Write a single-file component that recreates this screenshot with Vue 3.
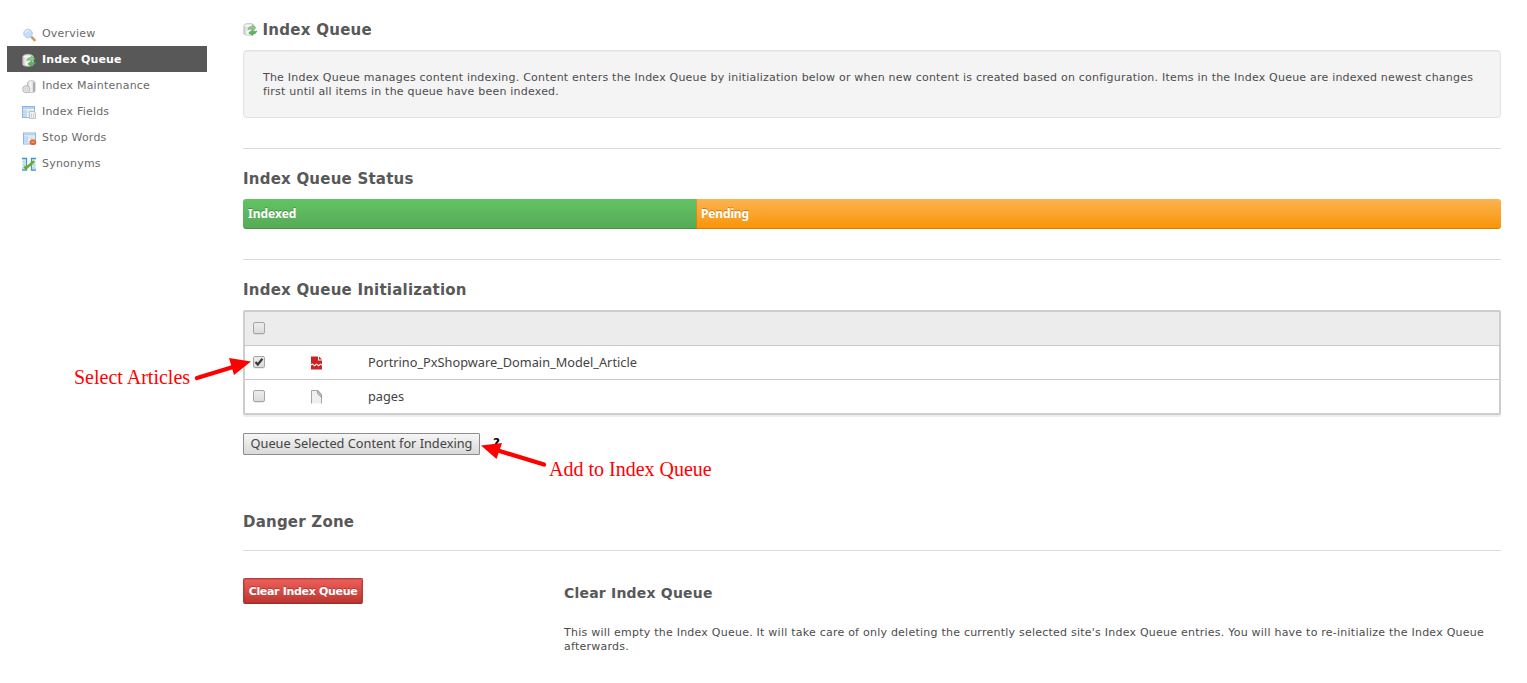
<script setup>
import { ref } from 'vue'

const nav = ref([
  { label: 'Overview', icon: 'search' },
  { label: 'Index Queue', icon: 'queue', active: true },
  { label: 'Index Maintenance', icon: 'maintenance' },
  { label: 'Index Fields', icon: 'fields' },
  { label: 'Stop Words', icon: 'stop' },
  { label: 'Synonyms', icon: 'synonyms' },
])
const rows = ref([
  { label: 'Portrino_PxShopware_Domain_Model_Article', checked: true, kind: 'article' },
  { label: 'pages', checked: false, kind: 'page' },
])
const progress = { indexed: 453, total: 1258 }
</script>

<template>
  <div class="page">
    <svg class="defs" width="0" height="0" aria-hidden="true">
      <defs>
        <linearGradient id="cyl" x1="0" x2="1" y1="0" y2="0">
          <stop offset="0" stop-color="#c4c4c4" /><stop offset=".35" stop-color="#fafafa" /><stop offset="1" stop-color="#c8c8c8" />
        </linearGradient>
        <symbol id="i-search" viewBox="0 0 16 16">
          <path d="M10 10.300l2.600 2.800" stroke="#cf9a62" stroke-width="2.600" stroke-linecap="round" />
          <circle cx="6" cy="6.500" r="4.300" fill="#c3defa" stroke="#b3cdee" stroke-width="1" />
          <path d="M3.500 6a3 3 0 0 1 3-2.400" fill="none" stroke="#e8f5ff" stroke-width="1.200" />
        </symbol>
        <symbol id="i-queue" viewBox="0 0 16 16">
          <path d="M.8 4c0-3.500 10.500-3.500 10.500 0v7.500c0 2.300-10.500 2.300-10.500 0z" fill="url(#cyl)" stroke="#c0c0c0" stroke-width=".8" />
          <ellipse cx="6" cy="3.800" rx="4.800" ry="1.700" fill="#f6f6f6" stroke="#d2d2d2" stroke-width=".6" />
          <path d="M4.600 7.800c.5-2.800 2.500-3.400 4.600-3.200V3l3.800 2.800-3.800 2.600V7c-1.800-.2-3.200-.1-4.600.8z" fill="#8ecb88" stroke="#62ae60" stroke-width=".6" />
          <path d="M13.800 9c-.6 2.300-2.200 3-4.200 2.900v1.500L5.800 10.900l3.800-2.700v1.500c1.700.1 3-.1 4.200-.7z" fill="#62b562" stroke="#419c4c" stroke-width=".6" />
        </symbol>
        <symbol id="i-maintenance" viewBox="0 0 16 16">
          <path d="M5.500 3.500c1.500-2.500 7-2.500 7.500 0v9c-1 1.500-7 1.500-7.500 0z" fill="url(#cyl)" stroke="#b5b5b5" stroke-width=".8" />
          <path d="M12 3.500v9" stroke="#949494" stroke-width="1.200" />
          <circle cx="4.300" cy="10.200" r="3.600" fill="#e4e4e4" stroke="#b0b0b0" stroke-width=".9" />
          <circle cx="4.300" cy="10.200" r="1.200" fill="#fff" stroke="#b5b5b5" stroke-width=".7" />
        </symbol>
        <symbol id="i-table" viewBox="0 0 16 16">
          <rect x=".5" y="1.500" width="12" height="11" fill="#f5faff" stroke="#90b3e6" />
          <path d="M1 2h11v2H1z" fill="#b6d1f3" />
          <path d="M1 4.500h3V12H1z" fill="#c6dcf7" />
          <path d="M4.500 4.500v8M8.500 4.500v8M1 7.300h11M1 10h11" stroke="#bdd4ee" stroke-width=".8" />
          <path d="M5 4.800h6.500v1.800H5z" fill="#d8eec6" />
        </symbol>
        <symbol id="i-fields" viewBox="0 0 16 16">
          <use href="#i-table" />
          <path d="M7.500 6.500h4.500l1.500 1.500v5.500h-6z" fill="#f1f1f1" stroke="#b5b5b5" stroke-width=".8" />
          <path d="M9.500 8.500v4M11.600 8.500v4" stroke="#cdcdcd" />
        </symbol>
        <symbol id="i-stop" viewBox="0 0 16 16">
          <use href="#i-table" x="1" y=".5" />
          <ellipse cx="10.900" cy="11.200" rx="3" ry="2.500" fill="#e8682c" stroke="#cc4a14" stroke-width=".6" />
          <path d="M9.300 11h3.200" stroke="#ffb58a" stroke-width="1" />
        </symbol>
        <symbol id="i-synonyms" viewBox="0 0 16 16">
          <path d="M0 1.500h4.500V13H0M14 1.500H9.500V13H14" fill="#eff8fd" stroke="#3d99c8" stroke-width="1.300" />
          <path d="M0 5h4M0 8h4M0 11h4M10 5h4M10 8h4M10 11h4M2 2v11M12 2v11" stroke="#a2cfe5" stroke-width=".9" />
          <path d="M2.300 9.500l1.700 1.700 8-7" fill="none" stroke="#74a91e" stroke-width="2.600" />
        </symbol>
      </defs>
    </svg>

    <nav class="menu">
      <a v-for="n in nav" :key="n.label" class="item" :class="{ active: n.active }">
        <svg class="icon" width="16" height="16"><use :href="'#i-' + n.icon" /></svg>
        <span class="text">{{ n.label }}</span>
      </a>
    </nav>

    <main class="content">
      <h2 class="title"><svg class="icon" width="16" height="16"><use href="#i-queue" /></svg>Index Queue</h2>
      <p class="info">The Index Queue manages content indexing. Content enters the Index Queue by initialization below or when new content is created based on configuration. Items in the Index Queue are indexed newest changes<br>first until all items in the queue have been indexed.</p>
      <hr>
      <h2>Index Queue Status</h2>
      <div class="progress">
        <div class="bar indexed" :style="{ width: (progress.indexed / progress.total) * 100 + '%' }">Indexed</div>
        <div class="bar pending">Pending</div>
      </div>
      <hr>
      <h2>Index Queue Initialization</h2>
      <div class="table">
        <div class="row head"><span class="check" /></div>
        <div v-for="r in rows" :key="r.label" class="row">
          <span class="check">
            <svg v-if="r.checked" width="10" height="10" viewBox="0 0 10 10"><path d="M1.500 5l2.300 2.500L8.400 1.800" fill="none" stroke="#3a3a3a" stroke-width="2.200" /></svg>
          </span>
          <svg v-if="r.kind === 'article'" class="type" width="12" height="14" viewBox="0 0 12 14">
            <path d="M0 .5h7v4h4v4L9.500 7.500 7.500 9 5.500 7.500 3.500 9 1.500 7.500 0 8z" fill="#cc2222" />
            <path d="M8 .5l3 3H8z" fill="#cc2222" />
            <path d="M0 9.500l1.500-.7 2 1.700 2-1.700 2 1.700 2-1.700L11 10v3.500H0z" fill="#cc2222" />
          </svg>
          <svg v-else class="type" width="12" height="14" viewBox="0 0 12 14">
            <path d="M.5 13.500V.5H7L10.500 4.500v9" fill="#efefef" stroke="#a5a5a5" />
            <path d="M6.500 .5v3l4 4V4.500z" fill="#bbb" stroke="#999" stroke-width=".8" />
          </svg>
          <span class="label">{{ r.label }}</span>
        </div>
      </div>
      <div class="actions">
        <button class="queue">Queue Selected Content for Indexing</button>
        <span class="help">?</span>
      </div>
      <h2 class="danger-title">Danger Zone</h2>
      <hr class="danger-line">
      <div class="danger">
        <div><button class="clear">Clear Index Queue</button></div>
        <div>
          <h3>Clear Index Queue</h3>
          <p class="desc">This will empty the Index Queue. It will take care of only deleting the currently selected site's Index Queue entries. You will have to re-initialize the Index Queue<br>afterwards.</p>
        </div>
      </div>
    </main>

    <div class="note first">Select Articles</div>
    <div class="note second">Add to Index Queue</div>
    <svg class="arrows" width="800" height="500" viewBox="0 0 800 500">
      <path d="M197 378L233 367M544 464.500L498 450.500" stroke="#f00" stroke-width="4.300" stroke-linecap="round" />
      <path d="M251 361.500L229 358L234 375zM481 445.500L502 443L496.500 459z" fill="#f00" />
    </svg>
  </div>
</template>

<style>
body { background: #fff; }
</style>
<style scoped>
.page { position: relative; display: flex; width: 1527px; height: 683px; overflow: hidden; box-sizing: border-box; padding: 20px 26px 0 7px; font: 11px/14px Verdana, "DejaVu Sans", sans-serif; letter-spacing: .212px; color: #4c4c4c; }
.defs { position: absolute; }
.menu { width: 200px; margin-right: 36px; flex: none; }
.item { display: flex; align-items: center; height: 26px; padding-left: 15px; color: #6a6a6a; letter-spacing: .2px; }
.item .icon { margin: 4px 4px 0 0; }
.item .text { padding-top: 2px; }
.active { background: #585858; color: #fff; font-weight: 700; letter-spacing: .13px; }
.content { flex: none; width: 1258px; }
h2 { margin: 0 0 10px; height: 20px; font-size: 15px; line-height: 20px; letter-spacing: .22px; color: #585858; white-space: nowrap; }
.title { display: flex; align-items: center; letter-spacing: .27px; }
.title .icon { margin: -1px 3.500px 0 0; }
hr { border: 0; height: 1px; margin: 30px 0 20px; background: #dcdcdc; }
.info { box-sizing: border-box; height: 68px; margin: 0; padding: 20px 19px 18px; border: 1px solid #e1e1e1; border-radius: 4px; background: #f4f4f4; white-space: nowrap; box-shadow: inset 0 1px 1px rgba(0,0,0,.04); }
.progress { display: flex; height: 30px; border-radius: 3px; overflow: hidden; }
.bar { box-sizing: border-box; padding-left: 5px; font: 700 12px/30px "Noto Sans", sans-serif; letter-spacing: 0; color: #fff; text-shadow: 0 -1px 0 rgba(0,0,0,.25); }
.indexed { background: linear-gradient(#62c462, #57a957); box-shadow: inset 0 -1px 0 rgba(0,0,0,.15); }
.pending { flex: 1; background: linear-gradient(#fbb450, #f89406); box-shadow: inset 1px 0 0 rgba(0,0,0,.15), inset 0 -1px 0 rgba(0,0,0,.15); letter-spacing: -.15px; }
.table { box-sizing: border-box; height: 105px; border: 2px solid #cdcdcd; border-radius: 2px; box-shadow: 0 2px 0 #ececec; font: 12.75px/20px "Noto Sans", sans-serif; letter-spacing: 0; color: #434343; }
.row { display: flex; align-items: center; box-sizing: border-box; height: 34px; padding: 0 0 2px 8px; border-bottom: 1px solid #c8c8c8; }
.row:last-child { height: 33px; border: 0; }
.head { background: #ececec; }
.check { flex: none; display: block; box-sizing: border-box; width: 12px; height: 12px; border: 1px solid #a5a5a5; border-radius: 2px; background: linear-gradient(#ededed, #dcdcdc); box-shadow: 0 1px 0 rgba(0,0,0,.08); }
.check svg { display: block; }
.type { margin: 3px 0 0 46px; }
.label { margin-left: 45px; }
.actions { display: flex; margin-top: 18px; height: 22px; }
button { box-sizing: border-box; padding: 0; white-space: nowrap; }
.queue { width: 237px; height: 22px; padding: 0 0 2px; border: 1px solid #8d8d8d; border-radius: 1px; background: linear-gradient(#f6f6f6, #d9d9d9); font: 12.75px/18px "Noto Sans", sans-serif; color: #434343; }
.help { margin-left: 13px; font: 700 12px/20px "DejaVu Sans", sans-serif; color: #000; }
.danger-title { margin: 57px 0 0; }
.danger-line { margin: 18px 0 27px; }
.danger { display: grid; grid-template-columns: 321px 1fr; }
.clear { display: block; width: 120px; height: 26px; padding-top: 2px; border: 1px solid #b93c39; border-bottom-color: #9c302e; border-radius: 2px; background: linear-gradient(#ee5f5b, #bd362f); box-shadow: inset 0 0 0 1px rgba(150,30,30,.22); color: #fff; font: 700 11px/22px "DejaVu Sans", sans-serif; letter-spacing: -.32px; text-shadow: 0 -1px 0 rgba(0,0,0,.25); }
h3 { margin: 5px 0 23px; font-size: 14px; line-height: 20px; letter-spacing: .2px; color: #585858; }
.desc { margin: 0; white-space: nowrap; letter-spacing: .234px; }
.note { position: absolute; white-space: nowrap; color: #f00; font: 20px/24px "Liberation Serif", serif; letter-spacing: 0; }
.first { left: 74px; top: 365px; }
.second { left: 549px; top: 457px; }
.arrows { position: absolute; left: 0; top: 0; pointer-events: none; }
</style>
